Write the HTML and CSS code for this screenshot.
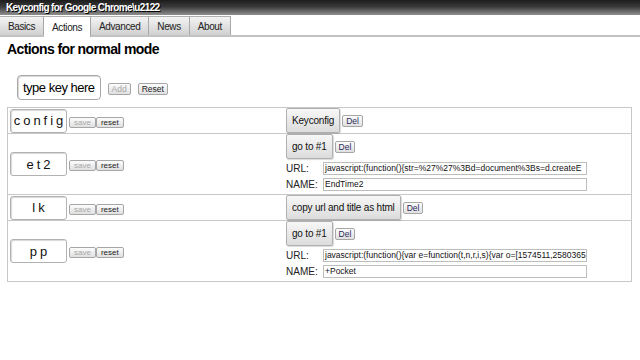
FILE: index.html
```html
<!DOCTYPE html>
<html>
<head>
<meta charset="utf-8">
<title>Keyconfig</title>
<link rel="stylesheet" href="styles.css">
</head>
<body>
<div class="titlebar">Keyconfig for Google Chrome\u2122</div>
<div class="tabs">
  <span class="tab first">Basics</span>
  <span class="tab active">Actions</span>
  <span class="tab">Advanced</span>
  <span class="tab">News</span>
  <span class="tab">About</span>
</div>
<div class="content">
  <h1>Actions for normal mode</h1>
  <div class="addrow">
    <div class="newkey">type key here</div>
    <button class="mini dis">Add</button>
    <button class="mini">Reset</button>
  </div>
  <div class="actions">
    <div class="row">
      <div class="keycell">
        <div class="keybox">config</div>
        <div class="pair"><button class="mini sm dis">save</button><button class="mini sm">reset</button></div>
      </div>
      <div class="actcell">
        <div class="btnline"><button class="big">Keyconfig</button><button class="mini del">Del</button></div>
      </div>
    </div>
    <div class="row">
      <div class="keycell">
        <div class="keybox">et2</div>
        <div class="pair"><button class="mini sm dis">save</button><button class="mini sm">reset</button></div>
      </div>
      <div class="actcell withfields">
        <div class="btnline"><button class="big">go to #1</button><button class="mini del">Del</button></div>
        <div class="field"><span class="lbl">URL:</span><div class="inp">javascript:(function(){str=%27%27%3Bd=document%3Bs=d.createE</div></div>
        <div class="field"><span class="lbl">NAME:</span><div class="inp">EndTime2</div></div>
      </div>
    </div>
    <div class="row">
      <div class="keycell">
        <div class="keybox">lk</div>
        <div class="pair"><button class="mini sm dis">save</button><button class="mini sm">reset</button></div>
      </div>
      <div class="actcell">
        <div class="btnline"><button class="big">copy url and title as html</button><button class="mini del">Del</button></div>
      </div>
    </div>
    <div class="row">
      <div class="keycell">
        <div class="keybox">pp</div>
        <div class="pair"><button class="mini sm dis">save</button><button class="mini sm">reset</button></div>
      </div>
      <div class="actcell withfields">
        <div class="btnline"><button class="big">go to #1</button><button class="mini del">Del</button></div>
        <div class="field"><span class="lbl">URL:</span><div class="inp">javascript:(function(){var e=function(t,n,r,i,s){var o=[1574511,2580365</div></div>
        <div class="field"><span class="lbl">NAME:</span><div class="inp">+Pocket</div></div>
      </div>
    </div>
  </div>
</div>
</body>
</html>
```
FILE: styles.css
```css
html, body {
  margin: 0;
  padding: 0;
  background: #fff;
  font-family: "Liberation Sans", Arial, sans-serif;
  color: #000;
}

.titlebar {
  height: 15px;
  line-height: 15px;
  padding-left: 6px;
  font-size: 10px;
  font-weight: bold;
  letter-spacing: -0.6px;
  color: #fff;
  text-shadow: 1px 1px 0 #000;
  background: linear-gradient(to bottom, #1c1c1c 0%, #3a3a3a 45%, #8e8e8e 100%);
}

.tabs {
  display: flex;
  height: 19px;
  margin-top: 1px;
  border-bottom: 2px solid #c2c2c2;
}

.tab {
  display: flex;
  align-items: center;
  padding: 0 8px;
  font-size: 10px;
  letter-spacing: -0.4px;
  color: #222;
  background: linear-gradient(to bottom, #f4f4f4, #d0d0d0);
  border-top: 1px solid #b0b0b0;
  border-right: 1px solid #a8a8a8;
  box-sizing: border-box;
}

.tab.active {
  background: #fff;
  margin-bottom: -2px;
}

.content {
  padding: 0 8px 0 7px;
}

h1 {
  margin: 4px 0 0;
  font-size: 14px;
  line-height: 16px;
  letter-spacing: -0.6px;
  font-weight: bold;
}

.addrow {
  display: flex;
  align-items: flex-end;
  gap: 7px;
  margin-top: 18px;
  padding-left: 10px;
}

.newkey {
  display: flex;
  align-items: center;
  height: 25px;
  box-sizing: border-box;
  padding: 0 5px;
  font-size: 13px;
  letter-spacing: -0.5px;
  border: 1px solid #a8a8a8;
  border-radius: 4px;
  box-shadow: inset 1px 1px 1px #d6d6d6;
}

.mini {
  height: 12px;
  margin: 0 0 5px;
  padding: 0 3px;
  box-sizing: border-box;
  font-family: "Liberation Sans", Arial, sans-serif;
  font-size: 8.5px;
  line-height: 10px;
  color: #222;
  border: 1px solid #a6a6a6;
  border-radius: 2px;
  background: linear-gradient(to bottom, #fcfcfc, #e0e0e0);
}

.mini.dis {
  color: #a8a8a8;
}

.actions {
  margin-top: 7px;
  border: 1px solid #c8c8c8;
}

.row {
  display: grid;
  grid-template-columns: 277px 1fr;
  border-top: 1px solid #c8c8c8;
}

.row:first-child {
  border-top: none;
}

.keycell {
  display: flex;
  align-items: center;
  gap: 2px;
  padding: 0 2px;
}

.keybox {
  display: flex;
  align-items: center;
  justify-content: center;
  width: 57px;
  height: 24px;
  box-sizing: border-box;
  padding-left: 3px;
  font-size: 13px;
  letter-spacing: 3px;
  color: #111;
  border: 1px solid #b2b2b2;
  border-radius: 3px;
  box-shadow: inset 1px 1px 1px #d8d8d8;
}

.pair {
  display: flex;
  margin-top: 3px;
}

.mini.sm {
  height: 11px;
  margin: 0;
  padding: 0 4px;
  font-size: 8px;
  line-height: 9px;
}

.actcell {
  padding: 0 0 0 1px;
}

.actcell.withfields {
  padding-bottom: 3px;
}

.btnline {
  display: flex;
  align-items: center;
  gap: 2px;
}

.big {
  height: 25px;
  box-sizing: border-box;
  padding: 0 5px;
  font-family: "Liberation Sans", Arial, sans-serif;
  font-size: 10px;
  letter-spacing: -0.2px;
  color: #111;
  border: 1px solid #b0b0b0;
  border-radius: 2px;
  background: linear-gradient(to bottom, #f7f7f7, #dcdcdc);
  box-shadow: 1px 1px 1px rgba(0, 0, 0, 0.15);
}

.mini.del {
  margin: 0;
  padding: 0 3px;
  color: #2a2a5a;
}

.field {
  display: flex;
  align-items: center;
  height: 13px;
  margin-top: 3px;
  font-size: 10px;
  color: #222;
}

.lbl {
  width: 37px;
}

.inp {
  width: 264px;
  height: 13px;
  box-sizing: border-box;
  padding: 0 1px;
  border: 1px solid #bdbdbd;
  font-size: 8.5px;
  line-height: 11px;
  color: #111;
  white-space: nowrap;
  overflow: hidden;
}
```
